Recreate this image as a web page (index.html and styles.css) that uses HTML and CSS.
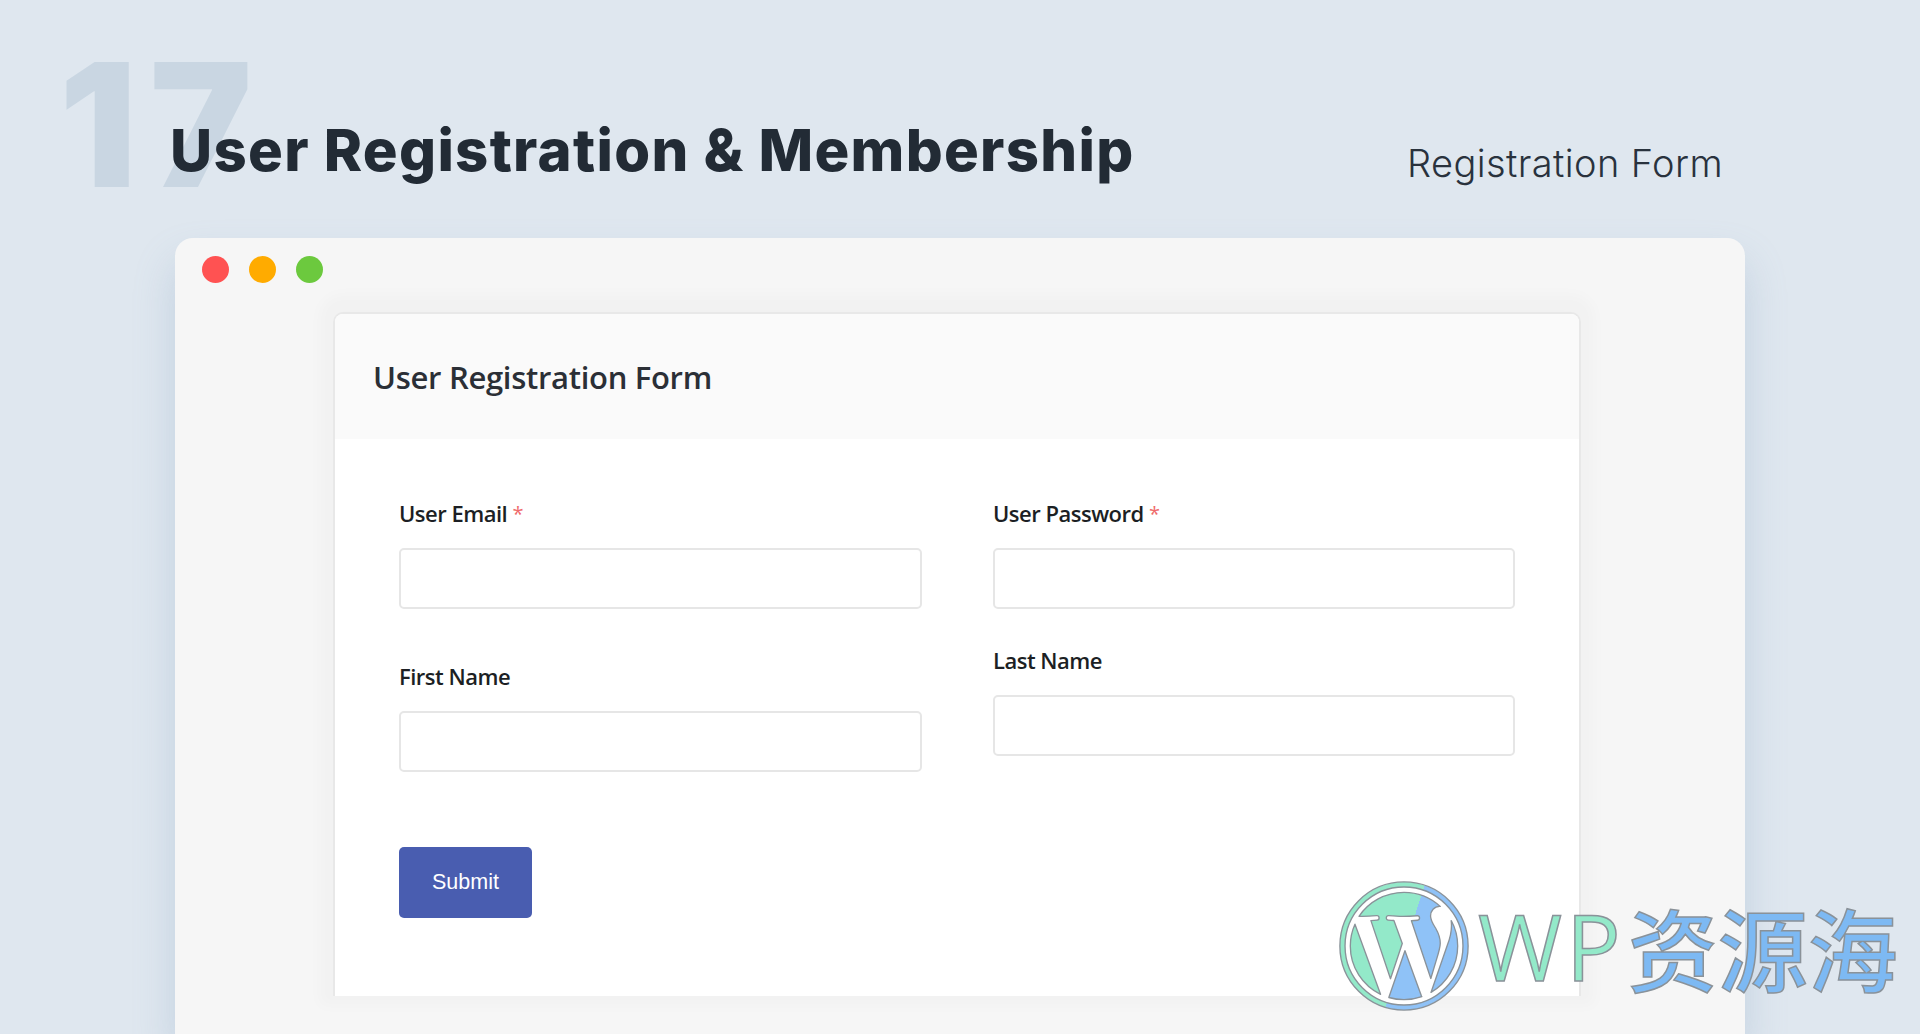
FILE: index.html
```html
<!DOCTYPE html>
<html lang="en">
<head>
<meta charset="utf-8">
<title>User Registration &amp; Membership</title>
<link rel="stylesheet" href="styles.css">
</head>
<body>
<div class="page">
  <header class="hero">
    <span class="hero-number">17</span>
    <h1 class="hero-title">User Registration &amp; Membership</h1>
    <p class="hero-sub">Registration Form</p>
  </header>
  <section class="window">
    <div class="dots">
      <span class="dot dot-red"></span>
      <span class="dot dot-amber"></span>
      <span class="dot dot-green"></span>
    </div>
    <div class="card">
      <div class="card-head"><h2 class="card-title">User Registration Form</h2></div>
      <form class="card-body">
        <div class="columns">
          <div class="column">
            <div class="field">
              <label class="field-label">User Email <span class="req">*</span></label>
              <div class="input"></div>
            </div>
            <div class="field field-far">
              <label class="field-label">First Name</label>
              <div class="input"></div>
            </div>
          </div>
          <div class="column">
            <div class="field">
              <label class="field-label">User Password <span class="req">*</span></label>
              <div class="input"></div>
            </div>
            <div class="field field-near">
              <label class="field-label">Last Name</label>
              <div class="input"></div>
            </div>
          </div>
        </div>
        <div class="submit">Submit</div>
      </form>
    </div>
  </section>
  <div class="watermark">
    <svg class="wm-logo" viewBox="-0.2 -0.2 24.4 24.4" aria-hidden="true">
      <defs>
        <linearGradient id="split" gradientUnits="userSpaceOnUse" x1="1.3" y1="9.6" x2="22.5" y2="16.4">
          <stop offset="0.5" stop-color="#93e9c9"/>
          <stop offset="0.5" stop-color="#8fc2f7"/>
        </linearGradient>
      </defs>
      <circle cx="12" cy="12" r="11.85" fill="url(#split)" stroke="#8a9299" stroke-width="0.25"/>
      <circle cx="12" cy="12" r="10.9" fill="#fff" stroke="#8a9299" stroke-width="0.25"/>
      <path transform="translate(12 12) scale(.92) translate(-12 -12)" fill="url(#split)" stroke="#8a9299" stroke-width="0.27" stroke-linejoin="round" d="M21.469 6.825c.84 1.537 1.318 3.3 1.318 5.175 0 3.979-2.156 7.456-5.363 9.325l3.295-9.527c.615-1.54.82-2.771.82-3.864 0-.405-.026-.78-.07-1.11m-7.981.105c.647-.03 1.232-.105 1.232-.105.582-.075.514-.93-.067-.899 0 0-1.755.135-2.88.135-1.064 0-2.85-.15-2.85-.15-.585-.03-.661.855-.075.885 0 0 .54.061 1.125.09l1.68 4.605-2.37 7.08L5.354 6.9c.649-.03 1.234-.1 1.234-.1.585-.075.516-.93-.065-.896 0 0-1.746.138-2.874.138-.2 0-.438-.008-.69-.015C4.911 3.15 8.235 1.215 12 1.215c2.809 0 5.365 1.072 7.286 2.833-.046-.003-.091-.009-.141-.009-1.06 0-1.812.923-1.812 1.914 0 .89.513 1.643 1.06 2.531.411.72.89 1.643.89 2.977 0 .915-.354 1.994-.821 3.479l-1.075 3.585-3.9-11.61.001.014zM12 22.784c-1.059 0-2.081-.153-3.048-.437l3.237-9.406 3.315 9.087c.024.053.05.101.078.149-1.12.393-2.325.609-3.582.609M1.211 12c0-1.564.336-3.05.935-4.39L7.29 21.709C3.694 19.96 1.212 16.271 1.211 12"/>
    </svg>
    <span class="wm-wp">WP</span><span class="wm-cn">资源海</span>
  </div>
</div>
</body>
</html>
```
FILE: styles.css
```css
* { box-sizing: border-box; }
html, body { margin: 0; height: 100%; }
body { background: #dfe7ef; overflow: hidden; }
.page { position: relative; width: 1920px; height: 1034px; overflow: hidden; display: flex; flex-direction: column; }

.hero { position: relative; flex: 0 0 238px; display: flex; justify-content: space-between; align-items: baseline; padding: 116px 197px 0 170px; }
.hero-number { position: absolute; left: 59px; top: 38px; font: 900 172px/1 Inter, sans-serif; color: #c9d6e2; letter-spacing: 13px; }
.hero-title { position: relative; margin: 0; font: 800 58px/1.2 Inter, sans-serif; color: #222b35; letter-spacing: 1.3px; }
.hero-sub { margin: 0; font: 300 38px/1.2 Inter, sans-serif; color: #29323d; letter-spacing: 0.4px; position: relative; top: 6px; }

.window { flex: 1; margin: 0 175px; padding: 18px 0 0; background: #f6f6f6; border-radius: 18px 18px 0 0; box-shadow: 0 24px 40px rgba(125, 155, 190, .3); }
.dots { display: flex; gap: 20px; margin-left: 27px; height: 56px; }
.dot { width: 27px; height: 27px; border-radius: 50%; }
.dot-red { background: #ff5252; }
.dot-amber { background: #ffab00; }
.dot-green { background: #6cc93e; }

.card { height: 684px; margin: 0 164px 0 158px; background: #fff; border: 2px solid #e8e8e8; border-bottom: 0; border-radius: 10px 10px 0 0; box-shadow: 0 -4px 14px 14px rgba(0, 0, 0, .02); }
.card-head { height: 125px; padding: 3px 0 0 38px; display: flex; align-items: center; background: #fafafa; border-radius: 8px 8px 0 0; }
.card-title { margin: 0; font: 600 31px/1.2 "Open Sans", sans-serif; color: #2b2f36; letter-spacing: -0.3px; }
.card-body { padding: 58px 64px 0 64px; }

.columns { display: grid; grid-template-columns: 523px 522px; gap: 71px; }
.field-label { display: block; height: 32px; font: 600 22px/32px "Open Sans", sans-serif; color: #1c1f24; letter-spacing: -0.5px; margin-bottom: 19px; }
.req { color: #ef6b6b; font-weight: 400; font-size: 20px; vertical-align: 1px; }
.input { height: 61px; background: #fff; border: 2px solid #e6e6e6; border-radius: 5px; }
.field-far { margin-top: 51px; }
.field-near { margin-top: 35px; }

.submit { width: 133px; height: 71px; margin-top: 75px; display: flex; align-items: center; justify-content: center; background: #495db0; border-radius: 5px; color: #fff; font: 400 21.5px/1 "Liberation Sans", sans-serif; }

.watermark { position: absolute; left: 1338px; top: 880px; display: flex; align-items: center; height: 132px; }
.wm-logo { width: 132px; height: 132px; margin-right: 8px; }
.wm-wp { font: 400 91px/1 "Open Sans", sans-serif; color: #93e9c9; letter-spacing: 4px; -webkit-text-stroke: 1.5px #8a9299; }
.wm-cn { font: 500 90px/1 "Noto Sans CJK SC", sans-serif; color: #7db9f3; -webkit-text-stroke: 1.5px #8a9299; margin-left: 3px; }
```
